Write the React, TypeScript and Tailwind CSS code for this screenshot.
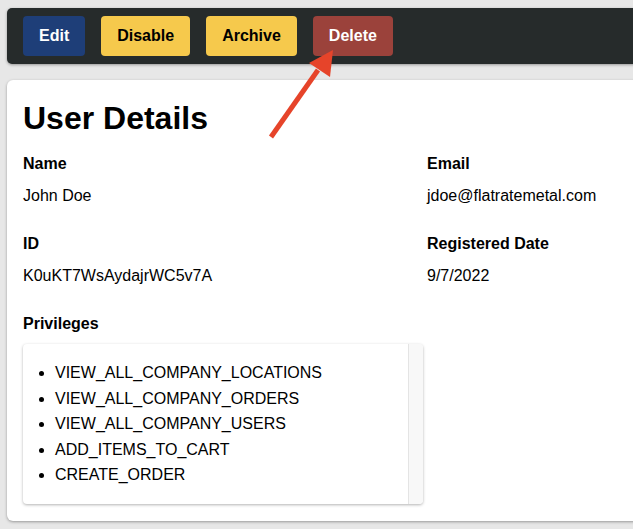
import React from "react"

const privileges = [
  "VIEW_ALL_COMPANY_LOCATIONS",
  "VIEW_ALL_COMPANY_ORDERS",
  "VIEW_ALL_COMPANY_USERS",
  "ADD_ITEMS_TO_CART",
  "CREATE_ORDER",
]

function Field({ label, value }: { label: string; value: string }) {
  return (
    <div>
      <div className="font-bold text-base leading-6">{label}</div>
      <div className="mt-2 text-base leading-6">{value}</div>
    </div>
  )
}

export default function App() {
  return (
    <div
      className="relative min-h-[529px] overflow-hidden bg-[#e7e7e7] pl-[7px] pt-2 pb-2 text-black"
      style={{ fontFamily: '"Liberation Sans", Arial, sans-serif' }}
    >
      {/* Toolbar */}
      <div className="-mr-4 flex h-14 items-center gap-4 rounded-l-[5px] bg-[#262b2b] pl-4 shadow-[0_1px_3px_rgba(0,0,0,0.35)]">
        <button className="h-10 rounded-[4px] bg-[#1e3e78] px-4 text-base font-bold text-white">Edit</button>
        <button className="h-10 rounded-[4px] bg-[#f6c94c] px-4 text-base font-bold text-black">Disable</button>
        <button className="h-10 rounded-[4px] bg-[#f6c94c] px-4 text-base font-bold text-black">Archive</button>
        <button className="h-10 rounded-[4px] bg-[#9b423b] px-4 text-base font-bold text-white">Delete</button>
      </div>

      {/* Card */}
      <div className="-mr-4 mt-4 rounded-l-[6px] bg-white px-4 pt-[18px] pb-[17px] shadow-[0_1px_3px_rgba(0,0,0,0.35)]">
        <h1 className="text-[32px] font-bold leading-10">User Details</h1>

        <div className="mt-[14px] grid grid-cols-[404px_1fr] gap-y-6">
          <Field label="Name" value="John Doe" />
          <Field label="Email" value="jdoe@flatratemetal.com" />
          <Field label="ID" value="K0uKT7WsAydajrWC5v7A" />
          <Field label="Registered Date" value="9/7/2022" />
        </div>

        <div className="mt-6 font-bold text-base leading-6">Privileges</div>
        <div className="mt-2 flex w-[400px] overflow-hidden rounded-[4px] bg-white shadow-[0_1px_3px_rgba(0,0,0,0.3)]">
          <ul className="flex-1 list-disc py-4 pl-8 text-base leading-[25.5px]">
            {privileges.map((p) => (
              <li key={p}>{p}</li>
            ))}
          </ul>
          <div className="w-[15px] border-l border-[#e4e4e4] bg-[#f8f8f8]" />
        </div>
      </div>

      {/* Annotation arrow */}
      <svg className="pointer-events-none absolute left-0 top-0" width="633" height="529">
        <line x1="271" y1="137" x2="318" y2="70" stroke="#e6442a" strokeWidth="5" />
        <polygon points="333,50 309,63 330,77" fill="#e6442a" />
      </svg>
    </div>
  )
}
